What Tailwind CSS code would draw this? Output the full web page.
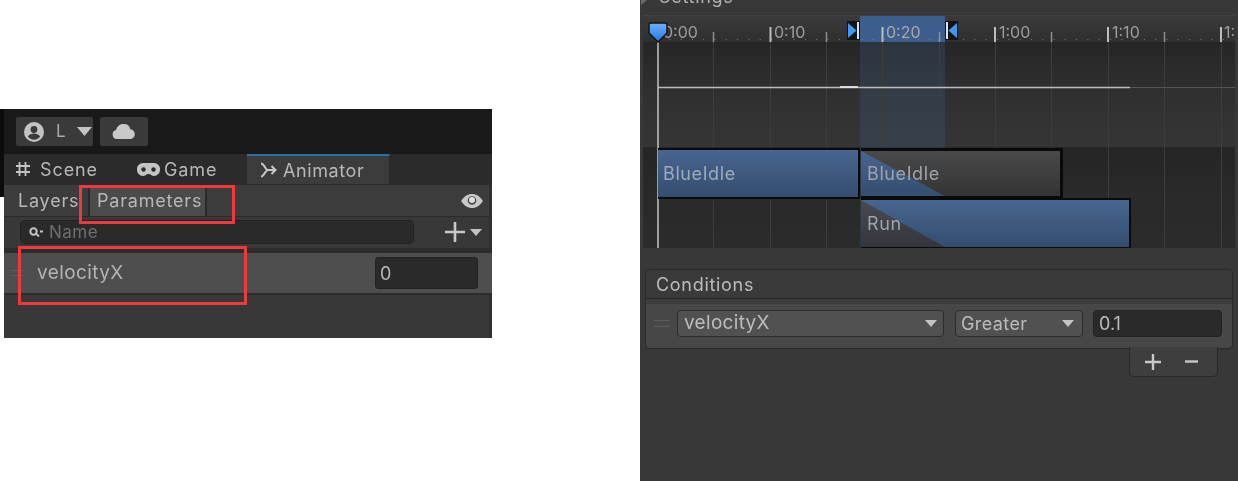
<!DOCTYPE html>
<html lang="en">
  <head>
    <meta charset="UTF-8" />
    <title>Animator parameters and transition</title>
    <script src="https://cdn.jsdelivr.net/npm/@tailwindcss/browser@4"></script>
  </head>
  <body class="bg-white font-['Inter',sans-serif] overflow-hidden">
    <div class="flex w-[1238px] h-[481px] overflow-hidden blur-[0.4px]">
      <!-- left: animator window -->
      <div class="relative w-[492px] h-[229px] mt-[109px] shrink-0 pl-[4px] text-[#b8b8b8]">
        <div class="absolute left-0 top-0 w-[4px] h-[88px] bg-[#0c0c0c]"></div>
        <div class="flex flex-col h-full bg-[#383838]">
          <!-- toolbar -->
          <div class="flex gap-[7px] h-[45px] pl-[12px] pt-[8px] bg-[#191919]">
            <div class="flex items-center w-[77px] h-[29px] pl-[8px] bg-[#3a3a3a] rounded-[2px]">
              <svg class="w-[20px] h-[20px]" viewBox="0 0 20 20"><circle cx="10" cy="10" r="10" fill="#c4c4c4"/><circle cx="10" cy="7.500" r="3.400" fill="#3a3a3a"/><path d="M3.800 14.600c1.300-2.300 3.600-3.200 6.200-3.200s4.900.9 6.200 3.200c-1.400 2-3.600 3.100-6.200 3.100s-4.800-1.100-6.200-3.100z" fill="#3a3a3a"/></svg>
              <span class="ml-[12px] text-[17px] leading-none text-[#a8a8a8]">L</span>
              <svg class="ml-[11px] w-[15px] h-[9px]" viewBox="0 0 15 9"><path d="M0 0h15L7.500 9z" fill="#c4c4c4"/></svg>
            </div>
            <div class="flex items-center justify-center w-[48px] h-[29px] bg-[#3a3a3a] rounded-[2px]">
              <svg class="w-[24px] h-[15px]" viewBox="0 0 24 15"><path d="M5 15a4.500 4.500 0 0 1-.8-8.900A7 7 0 0 1 12 0a6.500 6.500 0 0 1 6.300 5.200A5 5 0 0 1 19 15z" fill="#c8c8c8"/></svg>
            </div>
          </div>
          <!-- tabs -->
          <div class="flex h-[30px] bg-[#2b2b2b] text-[18px] tracking-[0.9px]">
            <div class="flex items-center w-[122px] pl-[11px] gap-[9px]">
              <svg class="w-[16px] h-[16px]" viewBox="0 0 16 16"><path d="M4.500 1v14M10.500 1v14M1 5h14M1 11h14" stroke="#c4c4c4" stroke-width="1.800" fill="none"/></svg>
              <span>Scene</span>
            </div>
            <div class="flex items-center w-[121px] pl-[11px] gap-[4px]">
              <svg class="w-[23px] h-[13px]" viewBox="0 0 23 13"><path d="M6 0h11a6 6 0 0 1 6 6.500 6 6 0 0 1-6 6.500c-2.500 0-3-2-5.500-2S8.500 13 6 13a6 6 0 0 1-6-6.500A6 6 0 0 1 6 0z" fill="#c4c4c4"/><circle cx="6.500" cy="6.500" r="2.200" fill="#2b2b2b"/><circle cx="16.500" cy="6.500" r="2.200" fill="#2b2b2b"/></svg>
              <span>Game</span>
            </div>
            <div class="flex items-center w-[143px] pl-[12px] gap-[6px] bg-[#3c3c3c] border-t-2 border-t-[#2b6ea6] border-r border-r-[#282828] tracking-[0.6px]">
              <svg class="w-[18px] h-[16px]" viewBox="0 0 18 16"><path d="M2 1.500c3.500 0 4 6.500 7 6.500h7M2 14.500c3.500 0 4-6.500 7-6.500M12.500 4l4 4-4 4" stroke="#c8c8c8" stroke-width="2" fill="none"/></svg>
              <span>Animator</span>
            </div>
          </div>
          <!-- layers / parameters -->
          <div class="flex items-center h-[33px] bg-[#3c3c3c] border-y border-[#2b2b2b] border-r-[3px] border-r-[#303030] text-[18px] tracking-[0.8px]">
            <div class="flex items-center h-full w-[86px] pl-[14px] border-r-2 border-[#2a2a2a]">Layers</div>
            <div class="flex items-center h-full w-[117px] pl-[7px] bg-[#4b4b4b] border-r-2 border-[#2a2a2a]">Parameters</div>
            <svg class="ml-auto mr-[6px] w-[22px] h-[14px]" viewBox="0 0 22 14"><path d="M0 7c3-4.500 6.500-7 11-7s8 2.500 11 7c-3 4.500-6.500 7-11 7S3 11.500 0 7z" fill="#c8c8c8"/><circle cx="11" cy="6.500" r="4.300" fill="#4a4a4a"/><circle cx="11" cy="6" r="3" fill="#e0e0e0"/></svg>
          </div>
          <!-- search -->
          <div class="flex items-start h-[31px] pt-[3px] pl-[16px] bg-[#383838] border-r-[3px] border-[#303030]">
            <div class="flex items-center w-[394px] h-[24px] pl-[8px] rounded-[5px] bg-[#2a2a2a] border border-[#212121]">
              <svg class="w-[14px] h-[11px]" viewBox="0 0 14 11"><circle cx="4.500" cy="4.500" r="3.200" stroke="#c4c4c4" stroke-width="2" fill="none"/><path d="M7 6.500l3 3M11 4.500h3" stroke="#c4c4c4" stroke-width="1.800"/></svg>
              <span class="ml-[6px] text-[17px] leading-none tracking-[0.5px] text-[#6f6f6f]">Name</span>
            </div>
            <svg class="ml-[31px] mt-[2px] w-[20px] h-[20px]" viewBox="0 0 20 20"><path d="M10 0v20M0 10h20" stroke="#c8c8c8" stroke-width="2.600"/></svg>
            <svg class="ml-[5px] mt-[9px] w-[12px] h-[7px]" viewBox="0 0 12 7"><path d="M0 0h12L6 7z" fill="#c4c4c4"/></svg>
          </div>
          <!-- parameter row -->
          <div class="flex items-center h-[47px] pl-[7px] bg-[#4e4e4e] border-t-[5px] border-b-[2px] border-[#2c2c2c]">
            <div class="w-[14px] h-[6px] border-y border-[#5c5c5c]"></div>
            <span class="ml-[12px] text-[19px] tracking-[0.4px] text-[#b4b4b4]">velocityX</span>
            <div class="flex items-center w-[103px] h-[32px] ml-auto mr-[14px] pl-[4px] rounded-[3px] bg-[#2a2a2a] border border-[#222] text-[18px]">0</div>
          </div>
          <div class="flex-1 bg-[#383838] border-r-[3px] border-[#303030]"></div>
        </div>
        <!-- red highlight boxes -->
        <div class="absolute left-[79px] top-[76px] w-[156px] h-[39px] border-[3px] border-[#ee3a3d]"></div>
        <div class="absolute left-[18px] top-[137px] w-[229px] h-[59px] border-[3px] border-[#ee3a3d]"></div>
      </div>

      <div class="w-[148px] shrink-0"></div>

      <!-- right: transition inspector -->
      <div class="relative w-[598px] h-[481px] shrink-0 bg-[#383838] text-[#bcbcbc]">
        <div class="absolute left-[19px] top-[-14px] text-[18px] tracking-[0.7px] leading-[22px] text-[#b0b0b0]">Settings</div>
        <svg class="absolute left-0 top-0 w-[8px] h-[6px]" viewBox="0 0 8 6"><path d="M1 0h6L1 5z" fill="#6c6c6c"/></svg>

        <!-- timeline -->
        <div class="absolute left-[3px] top-[15px] w-[592px] h-[233px] overflow-hidden border-t border-[#424242] bg-[#2b2b2b]">
          <div class="h-[26px] bg-gradient-to-b from-[#3a3a3a] to-[#2f2f2f]"></div>
          <div class="h-[105px] bg-gradient-to-b from-[#262626] via-[#303030] to-[#353535]"></div>
          <div class="h-[101px] bg-gradient-to-b from-[#252525] via-[#2a2a2a] to-[#2b2b2b]"></div>

          <!-- blue transition range -->
          <div class="absolute left-[217px] top-0 w-[85px] h-[26px] bg-[#3d5d8c]"></div>
          <div class="absolute left-[217px] top-[26px] w-[85px] h-[206px] bg-[#3f5f90]/25"></div>

          <!-- grid, ticks, curve -->
          <svg class="absolute left-0 top-0" width="592" height="232" viewBox="0 0 592 232">
            <g stroke="#3d3d3d" stroke-width="1">
              <path d="M70.500 26V232M127.500 26V232M183.500 26V232M239.500 26V232M296.500 26V232M352.500 26V232M408.500 26V232M465.500 26V232M521.500 26V232M578.500 26V232"/>
            </g>
            <g stroke="#7c7c7c" stroke-width="1" stroke-dasharray="1 10.300">
              <path d="M15 23.500H590"/>
            </g>
            <g stroke="#bdbdbd" stroke-width="2" fill="none">
              <path d="M127.500 11V26M239.500 11V26M352 11V26M465 11V26M578 11V26"/>
            </g>
            <g stroke="#909090" stroke-width="1.500" fill="none">
              <path d="M70.500 16V26M183.500 16V26M296.500 16V26M408.500 16V26M521.500 16V26"/>
            </g>
            <path d="M15 71.500H487" stroke="#bcbcbc" stroke-width="1.500"/>
            <path d="M197 71h18" stroke="#e6e6e6" stroke-width="1.800"/>
            <path d="M487 71.500H592" stroke="#555" stroke-width="1"/>
            <path d="M15 26V232" stroke="#c4c4c4" stroke-width="1.500"/>
          </svg>

          <div class="absolute left-[20px] top-[5px] text-[16px] leading-[22px] text-[#9c9c9c]">0:00</div>
          <div class="absolute left-[131px] top-[5px] text-[16px] leading-[22px] text-[#9c9c9c]">0:10</div>
          <div class="absolute left-[243px] top-[5px] text-[16px] leading-[22px] text-[#a8a8a8]">0:20</div>
          <div class="absolute left-[356px] top-[5px] text-[16px] leading-[22px] text-[#9c9c9c]">1:00</div>
          <div class="absolute left-[469px] top-[5px] text-[16px] leading-[22px] text-[#9c9c9c]">1:10</div>
          <div class="absolute left-[581px] top-[5px] text-[16px] leading-[22px] text-[#9c9c9c]">1:</div>

          <!-- clips -->
          <div class="absolute left-[15px] top-[132px] flex items-center w-[202px] h-[51px] pl-[5px] border-[2px] border-l-0 border-[#0a0a0a] bg-gradient-to-b from-[#486690] to-[#344d70] text-[18px] tracking-[0.6px] text-[#9fabba]">BlueIdle</div>
          <div class="absolute left-[218px] top-[132px] flex items-center w-[202px] h-[51px] pl-[6px] border-[3px] border-l-0 border-[#0a0a0a] bg-gradient-to-b from-[#4a4a4a] to-[#343434] text-[18px] tracking-[0.6px] text-[#9fa4ab] overflow-hidden">
            <div class="absolute left-0 top-0 w-[84px] h-full bg-gradient-to-b from-[#486690] to-[#344d70] [clip-path:polygon(0_0,100%_100%,0_100%)]"></div>
            <span class="relative">BlueIdle</span>
          </div>
          <div class="absolute left-[218px] top-[182px] flex items-center w-[270px] h-[51px] pl-[6px] border-[2px] border-l-0 border-[#0a0a0a] bg-gradient-to-b from-[#486690] to-[#344d70] text-[18px] tracking-[0.6px] text-[#9fa4ab] overflow-hidden">
            <div class="absolute left-0 top-0 w-[84px] h-full bg-gradient-to-b from-[#484b52] to-[#33363c] [clip-path:polygon(0_0,100%_100%,0_100%)]"></div>
            <span class="relative">Run</span>
          </div>

          <!-- in / out markers and playhead -->
          <svg class="absolute left-[203px] top-[5px]" width="14" height="19" viewBox="0 0 14 19"><path d="M1 0h13v19H1z" fill="#141414"/><path d="M2 2l8.500 7.500L2 17z" fill="#3f97f0"/><path d="M12 1v17" stroke="#d8e4f4" stroke-width="2"/></svg>
          <svg class="absolute left-[302px] top-[5px]" width="14" height="19" viewBox="0 0 14 19"><path d="M0 0h13v19H0z" fill="#141414"/><path d="M12 2L3.500 9.500 12 17z" fill="#3f97f0"/><path d="M2 1v17" stroke="#d8e4f4" stroke-width="2"/></svg>
          <svg class="absolute left-[5px] top-[6px]" width="20" height="21" viewBox="0 0 20 21">
            <defs><linearGradient id="head" x1="0" y1="0" x2="0" y2="1"><stop offset="0" stop-color="#6fb0f5"/><stop offset="1" stop-color="#1f78e6"/></linearGradient></defs>
            <path d="M3 1h14a2 2 0 0 1 2 2v8l-9 9-9-9V3a2 2 0 0 1 2-2z" fill="url(#head)" stroke="#151515" stroke-width="1.500"/>
          </svg>
        </div>

        <!-- conditions -->
        <div class="absolute left-[5px] top-[269px] w-[588px] rounded-[4px] border border-[#292929]">
          <div class="flex items-center h-[29px] pl-[10px] bg-[#3a3a3a] rounded-t-[4px] border-b border-[#292929] text-[18px] tracking-[0.7px]">Conditions</div>
          <div class="flex items-center h-[49px] pl-[8px] bg-[#474747] rounded-b-[4px] border-t-[5px] border-[#3c3c3c] pb-[5px]">
            <div class="w-[16px] h-[7px] border-y border-[#5c5c5c]"></div>
            <div class="flex items-center w-[267px] h-[27px] ml-[7px] pl-[6px] pr-[6px] justify-between rounded-[4px] bg-[#515151] border border-[#2b2b2b] text-[19px] tracking-[0.3px]">
              <span>velocityX</span>
              <svg class="w-[12px] h-[7px]" viewBox="0 0 12 7"><path d="M0 0h12L6 7z" fill="#c4c4c4"/></svg>
            </div>
            <div class="flex items-center w-[128px] h-[27px] ml-[11px] pl-[5px] pr-[8px] justify-between rounded-[4px] bg-[#515151] border border-[#2b2b2b] text-[18px] tracking-[0.4px]">
              <span>Greater</span>
              <svg class="w-[12px] h-[7px]" viewBox="0 0 12 7"><path d="M0 0h12L6 7z" fill="#c4c4c4"/></svg>
            </div>
            <div class="flex items-center w-[129px] h-[27px] ml-[10px] pl-[5px] rounded-[4px] bg-[#2a2a2a] border border-[#222] text-[18px]">0.1</div>
          </div>
        </div>
        <div class="absolute left-[489px] top-[347px] flex items-center w-[89px] h-[30px] pl-[15px] gap-[24px] bg-[#3e3e3e] border border-t-0 border-[#292929] rounded-b-[5px]">
          <svg class="w-[16px] h-[16px]" viewBox="0 0 16 16"><path d="M8 0v16M0 8h16" stroke="#c8c8c8" stroke-width="2.400"/></svg>
          <svg class="w-[13px] h-[3px]" viewBox="0 0 13 3"><path d="M0 1.500h13" stroke="#c8c8c8" stroke-width="2.400"/></svg>
        </div>
      </div>
    </div>
  </body>
</html>
